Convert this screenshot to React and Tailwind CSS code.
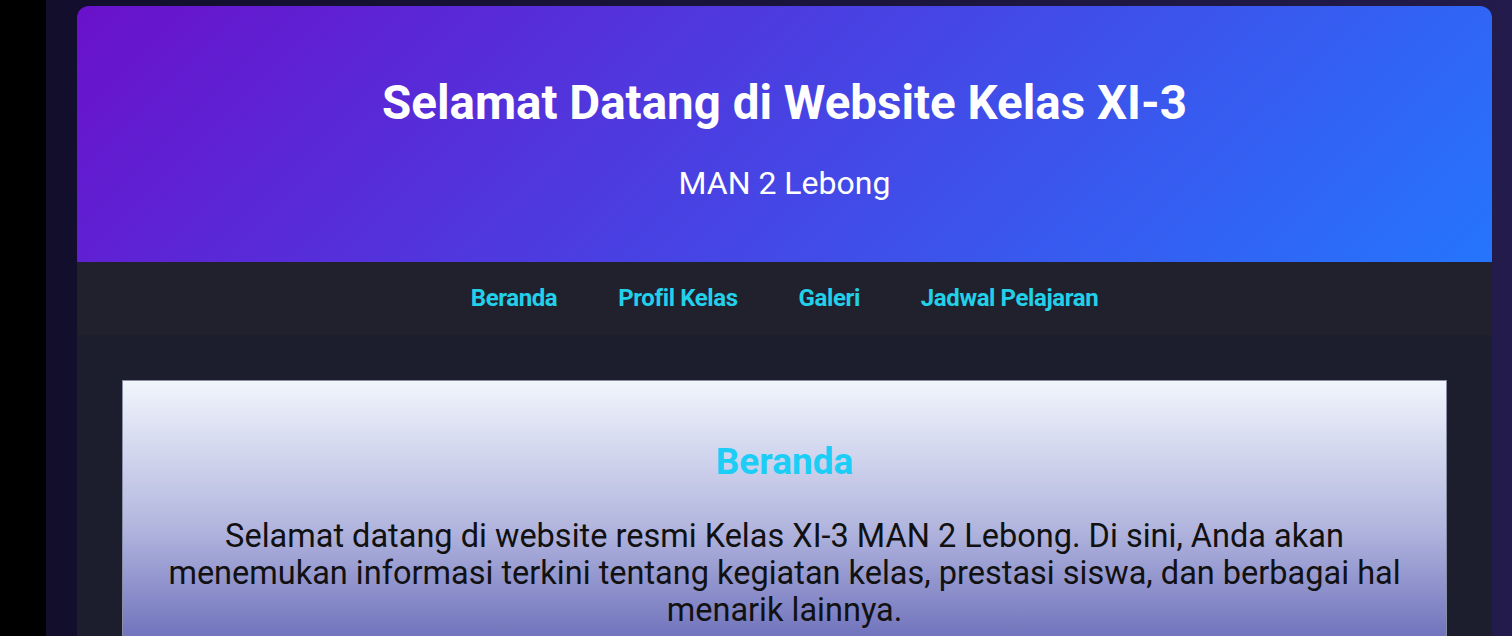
export default function App() {
  const links = ["Beranda", "Profil Kelas", "Galeri", "Jadwal Pelajaran"];

  return (
    <div className="flex h-[636px] w-full overflow-hidden bg-black font-['Roboto',sans-serif]">
      <div className="w-[46px] shrink-0 bg-black" />
      <div className="flex-1 bg-[linear-gradient(90deg,#120e2c,#221b4b)] pl-[31px] pr-[20px] pt-[6px]">
        <div className="overflow-hidden rounded-t-[12px] bg-[#1c1d2d]">
          <header className="flex h-[256px] flex-col items-center bg-[linear-gradient(135deg,#6a11cb,#2575fc)] pt-[68px] text-white">
            <h1 className="text-[47.5px] font-bold leading-[58px]">
              Selamat Datang di Website Kelas XI-3
            </h1>
            <p className="mt-[32px] text-[32px] leading-[38px]">MAN 2 Lebong</p>
          </header>

          <nav className="flex h-[73px] items-center justify-center gap-[61px] bg-[#21212e] pb-[2px]">
            {links.map((link) => (
              <a key={link} href="#" className="text-[24px] font-bold tracking-[-0.4px] text-[#22d0ea]">
                {link}
              </a>
            ))}
          </nav>

          <main className="px-[45px] pt-[45px]">
            <section className="border border-[#8a8fa8] bg-[linear-gradient(180deg,#f1f5fc_0%,#b3b7df_50%,#5e60b2_100%)] px-[36px] pb-[40px] pt-[56px] text-center">
              <h2 className="text-[37px] font-bold leading-[50px] text-[#1ccdf6]">Beranda</h2>
              <p className="mx-auto mt-[31px] max-w-[1250px] text-[32.5px] leading-[37px] text-[#111]">
                Selamat datang di website resmi Kelas XI-3 MAN 2 Lebong. Di sini, Anda akan menemukan
                informasi terkini tentang kegiatan kelas, prestasi siswa, dan berbagai hal menarik lainnya.
              </p>
            </section>
          </main>
        </div>
      </div>
    </div>
  );
}
